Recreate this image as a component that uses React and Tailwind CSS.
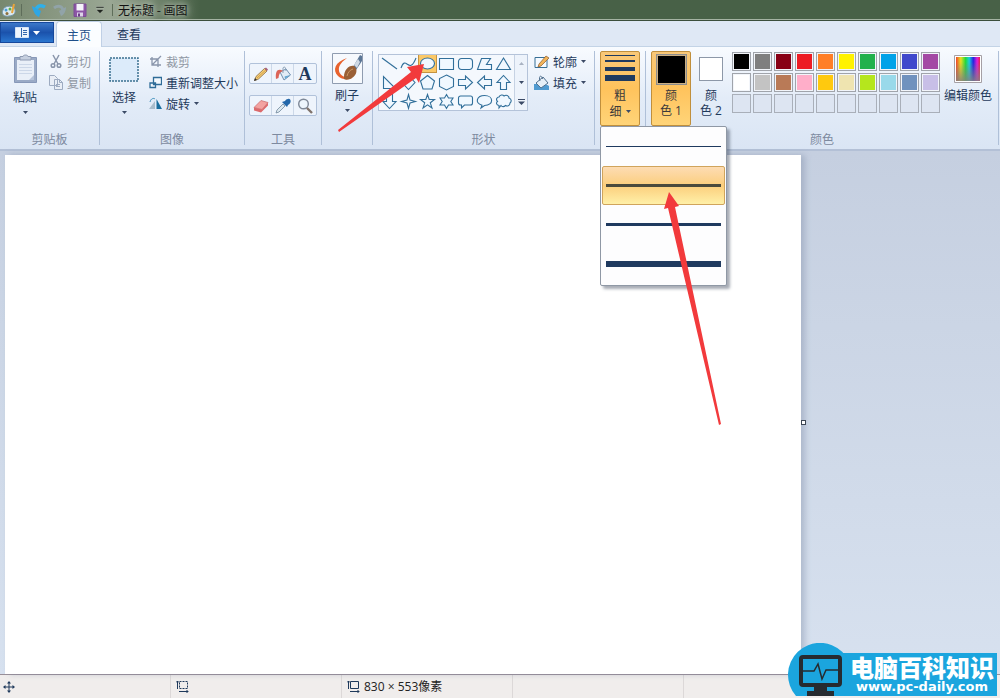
import { useState } from 'react';

const SHAPES = [
    { name: '直线', d: 'M2 4 L17 15' },
    { name: '曲线', d: 'M2 14 C7 0 10 22 17 4' },
    { name: '椭圆形', d: 'M2.5 9.5 a7 5.5 0 1 0 14 0 a7 5.5 0 1 0 -14 0' },
    { name: '矩形', d: 'M2.5 4.5 h14 v11 h-14 z' },
    { name: '圆角矩形', d: 'M5.5 4.5 h8 a3 3 0 0 1 3 3 v5 a3 3 0 0 1 -3 3 h-8 a3 3 0 0 1 -3 -3 v-5 a3 3 0 0 1 3 -3 z' },
    { name: '多边形', d: 'M6.5 4.5 h9 l-4 6 h5 v5 h-14 z' },
    { name: '三角形', d: 'M9.5 4 L16.5 15.5 H2.5 z' },
    { name: '直角三角形', d: 'M3.5 3.5 V15.5 H15.5 z' },
    { name: '菱形', d: 'M9.5 2.5 L16 9.5 L9.5 16.5 L3 9.5 z' },
    { name: '五边形', d: 'M9.5 2.5 L16.5 8 L14 16 H5 L2.5 8 z' },
    { name: '六边形', d: 'M9.5 2 L16.5 5.5 V13.5 L9.5 17 L2.5 13.5 V5.5 z' },
    { name: '右箭头', d: 'M2.5 6.5 H9.5 V3 L16.5 9.5 L9.5 16 V12.5 H2.5 z' },
    { name: '左箭头', d: 'M16.5 6.5 H9.5 V3 L2.5 9.5 L9.5 16 V12.5 H16.5 z' },
    { name: '上箭头', d: 'M6.5 16.5 V9.5 H3 L9.5 2.5 L16 9.5 H12.5 V16.5 z' },
    { name: '下箭头', d: 'M6.5 2.5 V9.5 H3 L9.5 16.5 L16 9.5 H12.5 V2.5 z' },
    { name: '四角星', d: 'M9.5 2.5 L11 8 L16.5 9.5 L11 11 L9.5 16.5 L8 11 L2.5 9.5 L8 8 z' },
    { name: '五角星', d: 'M9.5 2.5 L11.2 7.5 H16.5 L12.3 10.8 L14 16 L9.5 12.8 L5 16 L6.7 10.8 L2.5 7.5 H7.8 z' },
    { name: '六角星', d: 'M9.5 2.5 L11.5 6 H16 L13.8 9.5 L16 13 H11.5 L9.5 16.5 L7.5 13 H3 L5.2 9.5 L3 6 H7.5 z' },
    { name: '圆角矩形标注', d: 'M4.5 4 h10 a2 2 0 0 1 2 2 v5 a2 2 0 0 1 -2 2 h-6 l-3 3 v-3 h-1 a2 2 0 0 1 -2 -2 v-5 a2 2 0 0 1 2 -2 z' },
    { name: '椭圆形标注', d: 'M6 16 L7 13.2 C-1 11 2 3.5 9.5 3.5 C19 3.5 19 13.5 9.5 13.5 z' },
    { name: '云形标注', d: 'M5 5 C6 2.5 9 2.5 10 4 C12 2.5 15 3.5 15 6 C18 7 17.5 10 16 11 C16 14 13 14.5 11.5 13.5 C10 15 8 15 7 13.5 L5 16 L5 13.5 C2 13 2 10.5 3.5 9.5 C1.5 7.5 3 5 5 5 z' },
];

const COLORS = [
    ['#000000', '#7f7f7f', '#880015', '#ed1c24', '#ff7f27', '#fff200', '#22b14c', '#00a2e8', '#3f48cc', '#a349a4'],
    ['#ffffff', '#c3c3c3', '#b97a57', '#ffaec9', '#ffc90e', '#efe4b0', '#b5e61d', '#99d9ea', '#7092be', '#c8bfe7'],
    [null, null, null, null, null, null, null, null, null, null],
];

const SIZES = [
    { id: 1, line: 'h-px' },
    { id: 3, line: 'h-[3px]' },
    { id: 5, line: 'h-[3px]' },
    { id: 8, line: 'h-[6px]' },
];

const Caret = ({ className = 'text-[#3b4a66]' }) => (
    <svg width="5" height="3" viewBox="0 0 5 3" className={`shrink-0 ${className}`}>
        <path d="M0 0 H5 L2.5 3 z" fill="currentColor" />
    </svg>
);

const Group = ({ label, className = '', children }) => (
    <section aria-label={label} className={`flex shrink-0 flex-col border-r border-[#afc0d8] ${className}`}>
        <div className="flex flex-1 items-start">{children}</div>
        <div className="h-3 text-center leading-3 text-[#7d8a9f]">{label}</div>
    </section>
);

const SmallButton = ({ icon, label, caret, disabled }) => (
    <button disabled={disabled} className={`flex h-[21px] items-center gap-1 whitespace-nowrap ${disabled ? 'text-[#9098a4]' : 'text-[#1e395b]'}`}>
        {icon}
        <span>{label}</span>
        {caret && <Caret />}
    </button>
);

const TitleBar = () => (
    <header className="flex h-[21px] items-center border-b border-[#3c4f3c] bg-[#486147] bg-linear-to-r from-[#77886f] from-0% via-[#9aa794] via-11% to-[#486147] to-20% pl-px shadow-[inset_0_-1px_0_#a5b3a3]">
        <svg width="16" height="16" viewBox="0 0 16 16">
            <path d="M2 8 C3 4 10 3 13 6 C16 10 13 14 8 14 C3 15 0 12 2 8 z" fill="#dce9ef" stroke="#7698ad" />
            <circle cx="5" cy="8" r="1.5" fill="#4b9fd8" />
            <circle cx="9" cy="7" r="1.5" fill="#5dae4a" />
            <circle cx="6" cy="11.5" r="1.5" fill="#8c6f3c" />
            <path d="M11 11 L13 2" stroke="#e9a53b" strokeWidth="2" />
        </svg>
        <span className="ml-1 h-3 w-px bg-[#5e6d5a]" />
        <button aria-label="撤消" className="ml-2">
            <svg width="18" height="16" viewBox="0 0 18 16">
                <path d="M6 8 C7 3.5 11 2.5 15 5" fill="none" stroke="#2fb0ea" strokeWidth="3.5" />
                <path d="M2 4 L11 9 L9 15 C6 14 3 10 2 4 z" fill="#2fa6e4" />
            </svg>
        </button>
        <button aria-label="重做" disabled className="ml-1">
            <svg width="16" height="16" viewBox="0 0 16 16">
                <path d="M2 6 C6 3 10 4 11 8" fill="none" stroke="#91a3a8" strokeWidth="3" />
                <path d="M14 5 L7 9 L9 14 C12 13 14 9 14 5 z" fill="#91a3a8" />
            </svg>
        </button>
        <button aria-label="保存" className="ml-1">
            <svg width="16" height="16" viewBox="0 0 16 16">
                <path d="M2 2 H14 V14.5 H2 z" fill="#8c55a5" stroke="#7b4c95" />
                <path d="M4.5 2 h7 v6.5 h-7 z" fill="#f5f3fa" />
                <path d="M5 10.5 h6 v4 h-6 z" fill="#dcd2e8" />
                <path d="M6 11.5 h2 v3 h-2 z" fill="#6b3c85" />
            </svg>
        </button>
        <button aria-label="自定义快速访问工具栏" className="ml-2">
            <svg width="8" height="8" viewBox="0 0 8 8">
                <path d="M0 0.5 H8 V2 H0 z M0 3.5 H8 L4 7.5 z" fill="#20261f" stroke="#d7ddd4" strokeWidth=".4" />
            </svg>
        </button>
        <span className="ml-2 h-3 w-px bg-[#5e6d5a]" />
        <h1 className="ml-[5px] text-[#111] [text-shadow:0_0_6px_#c3ccbf,0_0_8px_#c3ccbf]">无标题 - 画图</h1>
    </header>
);

const Tabs = () => (
    <nav className="flex h-[26px] items-end border-b border-[#c3d3e6] bg-[#dfe8f5]">
        <button aria-label="画图" className="mb-[3px] flex h-[21px] w-[54px] items-center justify-center gap-1 border border-[#16489c] bg-linear-to-b from-[#3c78c9] via-[#1b52ac] to-[#2a76cf]">
            <svg width="14" height="11" viewBox="0 0 14 11">
                <path d="M.5 .5 h13 v10 h-13 z" fill="#eef5fd" stroke="#d4e3f5" />
                <path d="M6.5 1 v9 M8 3.5 h4 M8 5.5 h4 M8 7.5 h4" stroke="#3467ad" />
            </svg>
            <svg width="7" height="4" viewBox="0 0 7 4"><path d="M0 0 H7 L3.5 4 z" fill="#fff" /></svg>
        </button>
        <button className="-mb-px ml-0.5 h-[26px] w-[46px] rounded-t-sm border border-b-0 border-[#c0d0e6] bg-[#fbfdff] text-[#1e4f8a]">主页</button>
        <button className="h-[25px] w-[54px] text-[#1e395b]">查看</button>
    </nav>
);

const Clipboard = () => (
    <Group label="剪贴板" className="w-[100px]">
        <button className="ml-[5px] flex w-10 flex-col items-center text-[#1e395b]">
            <svg width="26" height="36" viewBox="0 0 26 36">
                <path d="M2.5 6.5 h22 v25 h-22 z" fill="#9aaac6" stroke="#8798b8" />
                <path d="M5 9 h17 v20 h-17 z" fill="#e9eff8" />
                <path d="M7 13.5 h13 M7 16.5 h13 M7 19.5 h13 M7 22.5 h13" stroke="#ccd7e8" />
                <path d="M8 9 V5.5 H11 C11 3.5 16 3.5 16 5.5 H19 V9 z" fill="#c5cfdf" stroke="#8d9ab2" />
                <path d="M22 29 v-5 l-5 5 z" fill="#b5c3da" />
            </svg>
            <span className="leading-5">粘贴</span>
            <span className="mt-1"><Caret /></span>
        </button>
        <div className="ml-1">
            <SmallButton disabled label="剪切" icon={
                <svg width="14" height="15" viewBox="0 0 14 15" fill="none" stroke="#8995ab" strokeWidth="1.5">
                    <path d="M4 1 L9 10 M10 1 L5 10" />
                    <circle cx="4" cy="11.5" r="1.8" />
                    <circle cx="10" cy="11.5" r="1.8" />
                </svg>
            } />
            <SmallButton disabled label="复制" icon={
                <svg width="14" height="15" viewBox="0 0 14 15" fill="#e9eef6" stroke="#9dabc1">
                    <path d="M.5 .5 h5 l3 3 v7 h-8 z M5.5 4.5 h5 l3 3 v7 h-8 z M10.5 4.5 v3 h3" />
                    <path d="M7 9.5 h4 M7 11.5 h4" />
                </svg>
            } />
        </div>
    </Group>
);

const ImageGroup = () => (
    <Group label="图像" className="w-[145px]">
        <button className="ml-1 flex w-10 flex-col items-center text-[#1e395b]">
            <svg width="30" height="36" viewBox="0 0 30 36">
                <path d="M1 7 h28 v23 h-28 z" fill="#dcebfa" stroke="#3a7090" strokeWidth="1.5" strokeDasharray="2 1" />
            </svg>
            <span className="leading-5">选择</span>
            <span className="mt-1"><Caret /></span>
        </button>
        <div className="ml-[5px]">
            <SmallButton disabled label="裁剪" icon={
                <svg width="13" height="13" viewBox="0 0 13 13" fill="none" stroke="#8995ab" strokeWidth="1.3">
                    <path d="M3 2 V10 H12 M1 4 H9 V12 M3 10 L12 1" />
                </svg>
            } />
            <SmallButton label="重新调整大小" icon={
                <svg width="13" height="13" viewBox="0 0 13 13" fill="#f3f8fd" stroke="#2f6c98" strokeWidth="1.3">
                    <path d="M4.5 1.5 h8 v7 h-8 z M1 7 h5.5 v4.5 h-5.5 z" />
                </svg>
            } />
            <SmallButton caret label="旋转" icon={
                <svg width="13" height="13" viewBox="0 0 13 13">
                    <path d="M6 4 V12 H0 z" fill="#a9bccb" />
                    <path d="M7.5 2 L13 12 H7.5 z" fill="#1b6e9e" />
                    <path d="M1 5 C2 1 5 1 6 2" fill="none" stroke="#3b8fbb" />
                </svg>
            } />
        </div>
    </Group>
);

const TOOLS = [
    [
        {
            name: '铅笔',
            icon: (
                <>
                    <path d="M1.5 14.5 L3 10.5 L11.5 2.5 L14 5 L5.5 13 z" fill="#f5cd74" stroke="#8a6a3c" strokeWidth=".8" />
                    <path d="M4 12 L13 3.8" stroke="#c99340" strokeWidth=".8" />
                    <path d="M11.5 2.5 L14 5 L15 3.5 L13 1.5 z" fill="#a9607c" />
                    <path d="M1 15 L2 12 L4 14 z" fill="#333" />
                </>
            ),
        },
        {
            name: '用颜色填充',
            icon: (
                <>
                    <path d="M5 6 L11 3 L15.5 9 L9 14 z" fill="#e3edf6" stroke="#6f8fae" />
                    <path d="M8 7 V2 C9 0 11 1 11 5" fill="none" stroke="#8ba0b6" />
                    <path d="M1 13 C0 5 3 2 8 5 C4.5 6 4 9 3.5 12 z" fill="#dc6458" />
                    <path d="M10 13 L15 9 L9.5 10.5 z" fill="#63a6d2" />
                </>
            ),
        },
        { name: '文本', text: true },
    ],
    [
        {
            name: '橡皮擦',
            icon: (
                <>
                    <path d="M1 9.5 L8 2.5 L15 4.5 L9 11.5 z" fill="#f3a2a0" stroke="#c7686a" strokeWidth=".7" />
                    <path d="M1 9.5 V12.5 L8 14.5 L15 7.5 V4.5 L9 11.5 z" fill="#dc6a6c" />
                </>
            ),
        },
        {
            name: '颜色选取器',
            icon: (
                <>
                    <path d="M1 15 L2 12 L8 6 L10 8 L4 14 z" fill="#dce8ef" stroke="#72899d" strokeWidth=".8" />
                    <path d="M7 4 L12 9 L13 7 C17 5 16 0 13 1 C11 1 10 3 10 3 z" fill="#2367a9" />
                </>
            ),
        },
        {
            name: '放大镜',
            icon: (
                <>
                    <circle cx="6.5" cy="6" r="4.8" fill="#edf5fc" stroke="#7e8897" strokeWidth="1.4" />
                    <path d="M10 10 L15 15" stroke="#80736c" strokeWidth="2.4" />
                </>
            ),
        },
    ],
];

const Tools = () => (
    <Group label="工具" className="w-[77px]">
        <div className="ml-1 mt-3 flex flex-col gap-[11px]">
            {TOOLS.map((row, i) => (
                <div key={i} className="flex h-[21px] divide-x divide-[#ccd8e8] rounded-xs border border-[#b1c2da] bg-[#eef4fc]">
                    {row.map((tool) => (
                        <button key={tool.name} aria-label={tool.name} className="flex w-[22px] items-center justify-center">
                            {tool.text
                                ? <span aria-hidden="true" className="font-['Liberation_Serif',serif] text-lg font-bold leading-4 text-[#1e395b]">A</span>
                                : <svg width="16" height="16" viewBox="0 0 16 16">{tool.icon}</svg>}
                        </button>
                    ))}
                </div>
            ))}
        </div>
    </Group>
);

const Brushes = () => (
    <Group className="w-[51px]">
        <button className="mx-auto mt-0.5 flex flex-col items-center text-[#1e395b]">
            <svg width="31" height="32" viewBox="0 0 31 32">
                <path d="M.5 .5 h30 v30 h-30 z" fill="#f6f9fd" stroke="#8f9cb0" />
                <path d="M15 5 C3 9 0 17 6 23 C10 27 16 27 20 25 C14 25 8 23 7 18 C6 12 11 8 15 5 z" fill="#e8622d" />
                <path d="M21 14 L28 2 L30 3 V8 L24 17 z" fill="#5c7796" />
                <path d="M22 12 L26 6 L28 9 L25 15 z" fill="#d0dae5" />
                <path d="M12 24 C12 17 17 12 22 13 C26 16 25 22 20 25 C17 27 11 28 12 24 z" fill="#9a6036" />
                <path d="M15 23 C16 19 18 17 21 16" stroke="#c99764" fill="none" />
            </svg>
            <span className="leading-5">刷子</span>
            <span className="mt-1"><Caret /></span>
        </button>
    </Group>
);

const Shapes = ({ shape, onShape }) => (
    <Group label="形状" className="w-[222px]">
        <div className="relative ml-[5px] mt-[3px] flex bg-[#f4f8fd] pl-0.5 outline -outline-offset-1 outline-[#b4c3d9]">
            <div className="grid grid-cols-7">
                {SHAPES.map((s) => (
                    <button
                        key={s.name}
                        aria-label={s.name}
                        onClick={() => onShape(s.name)}
                        className={`size-[19px] ${shape === s.name ? 'bg-[#fbc866] outline -outline-offset-1 outline-[#c59340]' : ''}`}
                    >
                        <svg width="19" height="19" viewBox="0 0 19 19" fill="#f0f8ff" stroke="#316f9a" strokeWidth="1.1">
                            <path d={s.d} fill={s.name === '曲线' ? 'none' : undefined} />
                        </svg>
                    </button>
                ))}
            </div>
            <div className="ml-px flex w-[14px] flex-col border-l border-[#c6d2e3] bg-[#edf3fb]">
                <button aria-label="上一行" className="flex flex-1 items-center justify-center"><Caret className="rotate-180 text-[#a8b2c2]" /></button>
                <button aria-label="下一行" className="flex flex-1 items-center justify-center"><Caret /></button>
                <button aria-label="其他" className="flex flex-1 items-center justify-center">
                    <svg width="7" height="6" viewBox="0 0 7 6"><path d="M0 0 h7 v1 h-7 z M0 2.5 h7 L3.5 6 z" fill="#3b4a66" /></svg>
                </button>
            </div>
            <svg width="88" height="70" viewBox="0 0 88 70" className="pointer-events-none absolute -left-[41px] top-2 z-20">
                <path d="M87 2 L70 5 L74 10 L1 68 L2 70 L79 16 L82 21 z" fill="#f23a3c" />
            </svg>
        </div>
        <div className="ml-1.5">
            <SmallButton caret label="轮廓" icon={
                <svg width="15" height="14" viewBox="0 0 15 14">
                    <path d="M1 2.5 h12 v10 h-12 z" fill="#f5faff" stroke="#376f96" />
                    <path d="M4 12 L5 9 L12 1 L15 3 L7 11 z" fill="#f2b45a" stroke="#8a5a2c" strokeWidth=".7" />
                </svg>
            } />
            <SmallButton caret label="填充" icon={
                <svg width="15" height="15" viewBox="0 0 15 15">
                    <path d="M0 9 H4 C7 11 11 8 15 11 V15 H0 z" fill="#4f9ad0" />
                    <path d="M2 8 L9 2 L14 8 L7 13 z" fill="#e6eff7" stroke="#52718f" />
                    <path d="M6 6 C4 0 8 0 8.5 4" fill="none" stroke="#52718f" />
                </svg>
            } />
        </div>
    </Group>
);

const SizeMenu = ({ size, onSize }) => (
    <div role="menu" className="absolute left-0 top-full z-10 w-[127px] rounded-xs border border-[#8f98a5] bg-[#fdfdfe] px-px pb-0.5 shadow-[3px_3px_3px_rgba(60,70,90,0.45)]">
        {SIZES.map((s) => (
            <button
                key={s.id}
                role="menuitem"
                aria-label={`${s.id}px`}
                onClick={() => onSize(s.id)}
                className={`flex h-[39px] w-full items-center rounded-xs border px-[3px] ${size === s.id
                    ? 'border-[#d0a45c] bg-linear-to-b from-[#fddcb3] via-[#fbce7c] via-50% to-[#fff0a8]'
                    : 'border-transparent'}`}
            >
                <span className={`w-full ${s.line} ${size === s.id ? 'bg-[#4a4a3c]' : 'bg-[#1f3a5f]'}`} />
            </button>
        ))}
        <svg width="60" height="236" viewBox="0 0 60 236" className="pointer-events-none absolute left-[62px] top-[64px]">
            <path d="M6 1 L1 18 L5 17 L56 234 L58 233 L12 16 L16 15 z" fill="#f23a3c" />
        </svg>
    </div>
);

const Size = ({ size, onSize }) => (
    <Group className="w-[51px]">
        <div className="relative ml-[5px]">
            <button className="flex h-[75px] w-10 flex-col items-center rounded-xs border border-[#c08f3c] bg-linear-to-b from-[#f9c878] via-[#ffc35c] to-[#ffd478] pt-[3px] text-[#3c3a3a]">
                <span className="h-px w-[30px] bg-[#1f3a5f]" />
                <span className="mt-1 h-0.5 w-[30px] bg-[#1f3a5f]" />
                <span className="mt-[5px] h-1 w-[30px] bg-[#1f3a5f]" />
                <span className="mt-1 h-[6px] w-[30px] bg-[#1f3a5f]" />
                <span className="mt-1.5 leading-4">粗</span>
                <span className="flex items-center gap-1 leading-4">细<Caret /></span>
            </button>
            <SizeMenu size={size} onSize={onSize} />
        </div>
    </Group>
);

const Colors = () => (
    <Group label="颜色" className="w-[353px]">
        <button className="ml-[5px] flex h-[75px] w-10 flex-col items-center rounded-xs border border-[#c08f3c] bg-linear-to-b from-[#f9c878] via-[#ffc35c] to-[#ffd478] pt-0.5 text-[#3c3a3a]">
            <span className="size-[31px] border border-[#8d8d8d] bg-black outline -outline-offset-2 outline-[#cbb084]" />
            <span className="mt-0.5 leading-4">颜</span>
            <span className="font-['Open_Sans','Noto_Sans_CJK_SC',sans-serif] leading-4">色 1</span>
        </button>
        <button className="flex h-[75px] w-10 flex-col items-center pt-1.5 text-[#1e395b]">
            <span className="size-6 border border-[#8d98a8] bg-white" />
            <span className="mt-1.5 leading-4">颜</span>
            <span className="font-['Open_Sans','Noto_Sans_CJK_SC',sans-serif] leading-4">色 2</span>
        </button>
        <div className="ml-px mt-px grid grid-cols-10 gap-0.5">
            {COLORS.flat().map((c, i) => (
                <button
                    key={i}
                    aria-label={c || '自定义颜色'}
                    className={`size-[19px] border p-px ${c ? 'border-[#a0a4ab] bg-[#f2f5fa]' : 'border-[#a9afb9] bg-[#dde5f2]'}`}
                >
                    {c && <span className="block size-full" style={{ backgroundColor: c }} />}
                </button>
            ))}
        </div>
        <button className="ml-1 mt-1 flex flex-col items-center whitespace-nowrap text-[#1e395b]">
            <svg width="28" height="28" viewBox="0 0 28 28">
                <defs>
                    <linearGradient id="hue">
                        <stop offset="0" stopColor="#f0442c" />
                        <stop offset=".2" stopColor="#e8e022" />
                        <stop offset=".4" stopColor="#22d83c" />
                        <stop offset=".55" stopColor="#18cfe0" />
                        <stop offset=".72" stopColor="#2423e0" />
                        <stop offset=".88" stopColor="#e01fd8" />
                        <stop offset="1" stopColor="#ee2244" />
                    </linearGradient>
                    <linearGradient id="gray" x2="0" y2="1">
                        <stop offset=".2" stopColor="#808080" stopOpacity="0" />
                        <stop offset="1" stopColor="#858080" stopOpacity=".85" />
                    </linearGradient>
                </defs>
                <path d="M.5 .5 h27 v27 h-27 z" fill="#fff" stroke="#a5a0a5" />
                <path d="M2 2 h24 v24 h-24 z" fill="url(#hue)" />
                <path d="M2 2 h24 v24 h-24 z" fill="url(#gray)" />
            </svg>
            <span className="mt-1 leading-4">编辑颜色</span>
        </button>
    </Group>
);

const Workspace = () => (
    <main className="flex flex-1 bg-linear-to-b from-[#c5cfe0] to-[#d7e1ef] pl-[5px] pt-1">
        <div className="relative w-[796px] shrink-0 bg-white shadow-[4px_0_6px_rgba(120,135,160,0.4)]">
            <span className="absolute -right-[5px] top-[51%] size-[5px] border border-[#3d4653] bg-white" />
        </div>
    </main>
);

const StatusBar = () => (
    <footer className="flex h-6 items-center border-t border-[#998f98] bg-[#f0edec] text-[#222] *:flex *:h-full *:w-[171px] *:shrink-0 *:items-center *:border-r *:border-[#dcd8d8]">
        <div className="pl-[3px]">
            <svg width="12" height="12" viewBox="0 0 12 12" fill="#1e395b" stroke="#1e395b">
                <path d="M6 2 V10 M2 6 H10" />
                <path d="M6 0 l2 2.5 h-4 z M6 12 l2 -2.5 h-4 z M0 6 l2.5 -2 v4 z M12 6 l-2.5 -2 v4 z" stroke="none" />
            </svg>
        </div>
        <div className="pl-[5px]">
            <svg width="13" height="13" viewBox="0 0 13 13" fill="none" stroke="#1e395b">
                <path d="M3.5 1.5 h8 v7 h-8 z" strokeDasharray="2 1" />
                <path d="M1.5 1 v8 M0 2.5 L1.5 1 L3 2.5 M3 11.5 h9 M10.5 10 L12 11.5 L10.5 13" />
            </svg>
        </div>
        <div className="gap-1 pl-[5px]">
            <svg width="13" height="13" viewBox="0 0 13 13" fill="none" stroke="#1e395b">
                <path d="M3.5 1.5 h8 v7 h-8 z" />
                <path d="M1.5 1 v8 M0 2.5 L1.5 1 L3 2.5 M3 11.5 h9 M10.5 10 L12 11.5 L10.5 13" />
            </svg>
            <span className="font-['Open_Sans','Noto_Sans_CJK_SC',sans-serif]">830 × 553像素</span>
        </div>
        <div />
    </footer>
);

const SiteBadge = () => (
    <a href="#" className="absolute bottom-0.5 right-[3px] z-30 flex h-[43px] items-center bg-[#1ba5de] pl-[30px] pr-[3px] text-white">
        <svg width="64" height="53" viewBox="0 0 64 53" className="absolute -left-8 bottom-0">
            <path d="M8 53 A32 32 0 1 1 56 53 z" fill="#1ba5de" />
            <path d="M15 14 h35 a2 2 0 0 1 2 2 v24 a2 2 0 0 1 -2 2 h-35 a2 2 0 0 1 -2 -2 v-24 a2 2 0 0 1 2 -2 z" fill="none" stroke="#262b30" strokeWidth="4" />
            <path d="M15 28 h11 l4 -7 l4 15 l4 -9 h12" fill="none" stroke="#262b30" strokeWidth="1.5" />
            <path d="M26 43 h13 v5 h7 v5 h-27 v-5 h7 z" fill="#262b30" />
        </svg>
        <span className="flex flex-col items-center">
            <span className="text-2xl font-black leading-6">电脑百科知识</span>
            <span className="font-['DejaVu_Sans',sans-serif] text-[13px] font-bold leading-4">www.pc-daily.com</span>
        </span>
    </a>
);

const App = () => {
    const [shape, setShape] = useState('椭圆形');
    const [size, setSize] = useState(3);

    return (
        <div className="relative flex min-h-screen flex-col overflow-hidden font-['Noto_Sans_CJK_SC',sans-serif] text-xs">
            <TitleBar />
            <Tabs />
            <div className="flex h-[104px] border-b-2 border-[#b3c0d6] bg-linear-to-b from-[#f8fbff] via-[#e3ecf8] to-[#dae5f4] pb-1 pt-1">
                <Clipboard />
                <ImageGroup />
                <Tools />
                <Brushes />
                <Shapes shape={shape} onShape={setShape} />
                <Size size={size} onSize={setSize} />
                <Colors />
            </div>
            <Workspace />
            <StatusBar />
            <SiteBadge />
        </div>
    );
};

export default App;
